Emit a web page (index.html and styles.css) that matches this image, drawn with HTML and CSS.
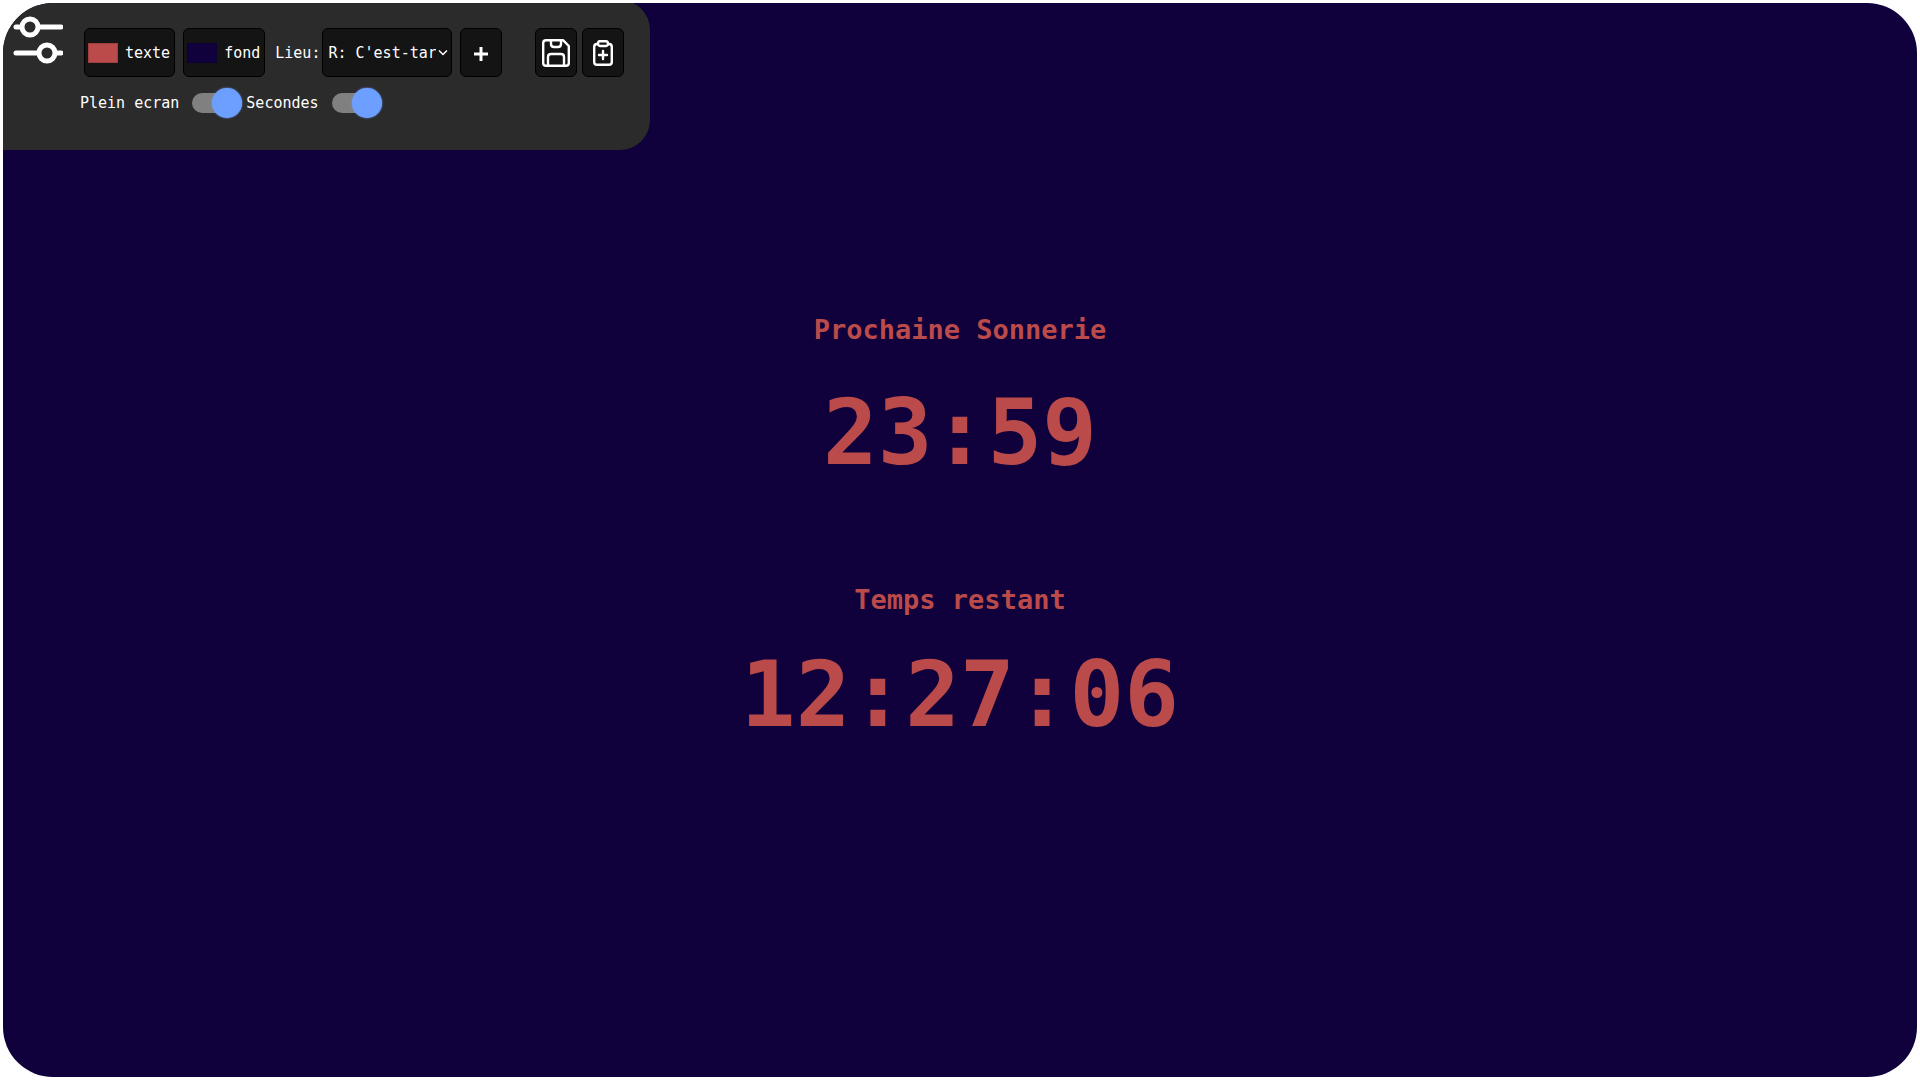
FILE: index.html
```html
<!DOCTYPE html>
<html lang="fr">
<head>
<meta charset="utf-8">
<meta name="viewport" content="width=device-width, initial-scale=1">
<title>Prochaine Sonnerie</title>
<link rel="stylesheet" href="styles.css">
</head>
<body>
<div class="app">
  <header class="panel">
    <button class="menu" type="button" aria-label="Options">
      <svg width="50" height="48" viewBox="0 0 50 48" fill="none" stroke="#fff" stroke-width="5" stroke-linecap="round">
        <path d="M3 11H8M26 11H48M3 37H24M43 37H48"/>
        <circle cx="17" cy="11" r="8"/>
        <circle cx="34" cy="37" r="8"/>
      </svg>
    </button>
    <div class="controls">
      <div class="row">
        <label class="box color"><input type="color" value="#bb4a4a">texte</label>
        <label class="box color"><input type="color" value="#10003b">fond</label>
        <div class="place">
          <label for="lieu">Lieu:</label>
          <div class="select">
            <select class="box" id="lieu"><option>R: C'est-tard</option></select>
            <svg class="chevron" width="10" height="8" viewBox="0 0 10 8" fill="none" stroke="#fff" stroke-width="1.5"><path d="M1 1.5L5 5.5L9 1.5"/></svg>
          </div>
        </div>
        <button class="box square" type="button" aria-label="Ajouter">
          <svg class="plus" width="14" height="14" viewBox="0 0 14 14" fill="none" stroke="#fff" stroke-width="3"><path d="M7 0V14M0 7H14"/></svg>
        </button>
        <div class="files">
          <button class="box square" type="button" aria-label="Enregistrer">
            <svg width="28" height="28" viewBox="0 0 28 28" fill="none" stroke="#fff" stroke-width="2.4" stroke-linejoin="round">
              <path d="M4 1.200H21L26.800 7V24Q26.800 26.800 24 26.800H4Q1.200 26.800 1.200 24V4Q1.200 1.200 4 1.200Z"/>
              <path d="M9 1V5Q9 8 12 8H16Q19 8 19 5V1M6 27V18Q6 15 9 15H19Q22 15 22 18V27"/>
            </svg>
          </button>
          <button class="box square" type="button" aria-label="Coller">
            <svg width="20" height="26" viewBox="0 0 20 26" fill="none" stroke="#fff" stroke-width="2.4" stroke-linecap="round" stroke-linejoin="round">
              <path d="M5 4H4Q1.200 4 1.200 7V22Q1.200 24.800 4 24.800H16Q18.800 24.800 18.800 22V7Q18.800 4 16 4H15"/>
              <path d="M7 1.200H13Q15 1.200 15 3.500T13 6H7Q5 6 5 3.500T7 1.200ZM10 11V19M6 15H14"/>
            </svg>
          </button>
        </div>
      </div>
      <div class="row switches">
        <label class="switch">Plein ecran<input type="checkbox" checked></label>
        <label class="switch">Secondes<input type="checkbox" checked></label>
      </div>
    </div>
  </header>
  <main class="clock">
    <h1 class="title">Prochaine Sonnerie</h1>
    <p class="time">23:59</p>
    <h2 class="title second">Temps restant</h2>
    <p class="time remaining">12:27:06</p>
  </main>
</div>
</body>
</html>
```
FILE: styles.css
```css
* { box-sizing: border-box; }

body {
  margin: 0;
  padding: 3px;
  background: #fff;
  color: #fff;
  font: 15px/20px "DejaVu Sans Mono", monospace;
}

.app {
  min-height: calc(100vh - 6px);
  border-radius: 50px;
  overflow: hidden;
  background: #10003b;
}

.panel {
  display: flex;
  width: fit-content;
  min-height: 150px;
  margin-top: -3px;
  padding: 16px 26px 0 10px;
  border-radius: 0 30px 30px 0;
  background: #2b2b2b;
}

.menu {
  align-self: flex-start;
  padding: 0;
  border: 0;
  background: none;
}

svg { display: block; }

.controls { padding: 12px 0 0 17px; }

.row {
  display: flex;
  align-items: center;
  gap: 8px;
  padding-left: 4px;
}

.box {
  height: 49px;
  border: 1px solid #000;
  border-radius: 6px;
  background: #141414;
  color: #fff;
  font: inherit;
}

.color {
  display: flex;
  align-items: center;
  gap: 7px;
  padding: 0 4px 0 3px;
}

.color input {
  appearance: none;
  width: 30px;
  height: 20px;
  padding: 0;
  border: 0;
  background: none;
}

.color input::-webkit-color-swatch-wrapper { padding: 0; }
.color input::-webkit-color-swatch { border: 1px solid rgba(0, 0, 0, 0.15); }

.place {
  display: flex;
  align-items: center;
  gap: 2px;
  margin-left: 2px;
}

.select {
  display: grid;
  align-items: center;
}

.select select {
  grid-area: 1 / 1;
  appearance: none;
  width: 130px;
  padding: 0 15px 0 5px;
}

.chevron {
  grid-area: 1 / 1;
  justify-self: end;
  margin-right: 4px;
  pointer-events: none;
}

.square {
  display: flex;
  align-items: center;
  justify-content: center;
  width: 42px;
  padding: 0;
}

.plus { margin-top: 3px; }

.files {
  display: flex;
  gap: 5px;
  margin-left: 25px;
}

.switches {
  gap: 4px;
  margin-top: 11px;
  padding-left: 0;
}

.switch {
  display: flex;
  align-items: center;
  gap: 13px;
}

.switch input {
  appearance: none;
  display: flex;
  align-items: center;
  justify-content: flex-end;
  width: 50px;
  height: 20px;
  margin: 5px 0;
  border-radius: 10px;
  background: #808080;
}

.switch input::before {
  content: "";
  flex: none;
  width: 30px;
  height: 30px;
  border-radius: 50%;
  background: #6c9fff;
  box-shadow: 0 0 2px #6c9fff;
}

.switch input:not(:checked) { justify-content: flex-start; }

.clock {
  padding: 164px 16px 40px;
  color: #bb4a4a;
  text-align: center;
}

.title {
  margin: 0;
  font-size: 27px;
  line-height: 32px;
}

.time {
  margin: 34px 0 0;
  font-size: 91px;
  font-weight: bold;
  line-height: 106px;
}

.second { margin-top: 98px; }
.remaining { margin-top: 26px; }
```
